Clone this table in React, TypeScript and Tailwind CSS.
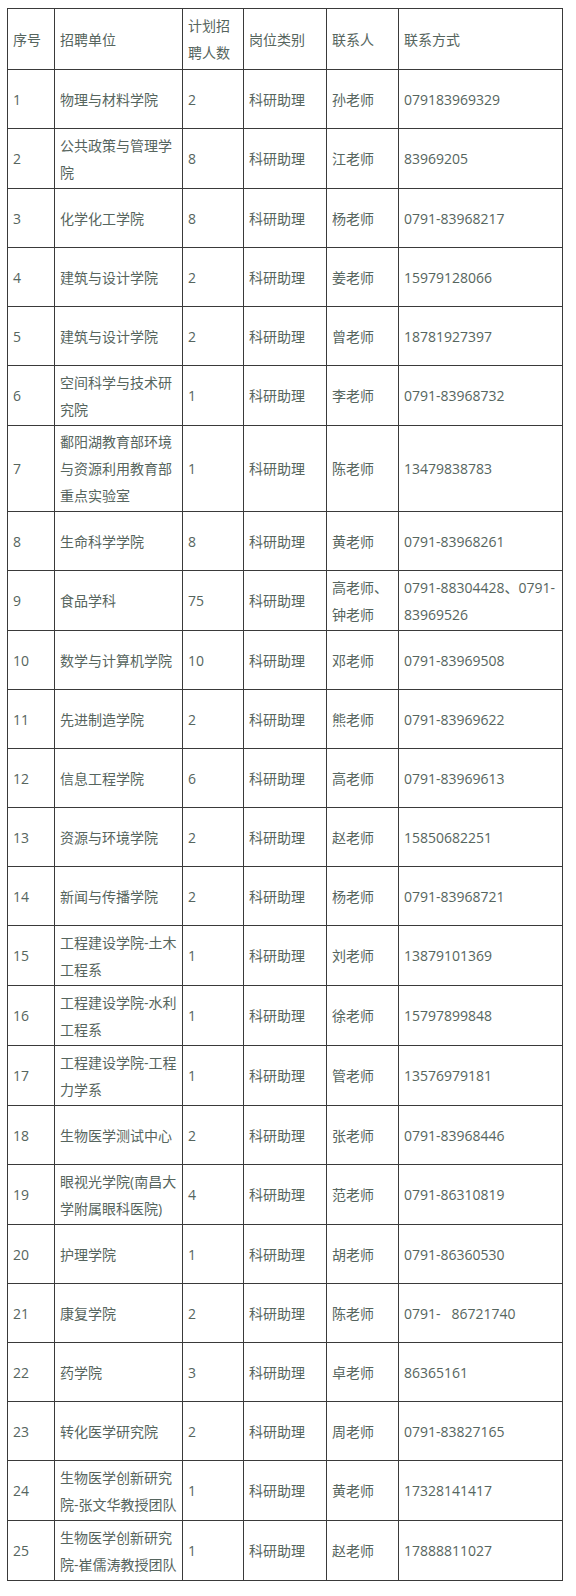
import React from "react";

type Row = {
  no: string;
  unit: string[];
  num: string;
  contact: string[];
  phone: string[];
  h: number;
};

const rows: Row[] = [
  { no: "1", unit: ["物理与材料学院"], num: "2", contact: ["孙老师"], phone: ["079183969329"], h: 59 },
  { no: "2", unit: ["公共政策与管理学", "院"], num: "8", contact: ["江老师"], phone: ["83969205"], h: 60 },
  { no: "3", unit: ["化学化工学院"], num: "8", contact: ["杨老师"], phone: ["0791-83968217"], h: 59 },
  { no: "4", unit: ["建筑与设计学院"], num: "2", contact: ["姜老师"], phone: ["15979128066"], h: 59 },
  { no: "5", unit: ["建筑与设计学院"], num: "2", contact: ["曾老师"], phone: ["18781927397"], h: 59 },
  { no: "6", unit: ["空间科学与技术研", "究院"], num: "1", contact: ["李老师"], phone: ["0791-83968732"], h: 60 },
  { no: "7", unit: ["鄱阳湖教育部环境", "与资源利用教育部", "重点实验室"], num: "1", contact: ["陈老师"], phone: ["13479838783"], h: 86 },
  { no: "8", unit: ["生命科学学院"], num: "8", contact: ["黄老师"], phone: ["0791-83968261"], h: 59 },
  { no: "9", unit: ["食品学科"], num: "75", contact: ["高老师、", "钟老师"], phone: ["0791-88304428、0791-", "83969526"], h: 60 },
  { no: "10", unit: ["数学与计算机学院"], num: "10", contact: ["邓老师"], phone: ["0791-83969508"], h: 59 },
  { no: "11", unit: ["先进制造学院"], num: "2", contact: ["熊老师"], phone: ["0791-83969622"], h: 59 },
  { no: "12", unit: ["信息工程学院"], num: "6", contact: ["高老师"], phone: ["0791-83969613"], h: 59 },
  { no: "13", unit: ["资源与环境学院"], num: "2", contact: ["赵老师"], phone: ["15850682251"], h: 59 },
  { no: "14", unit: ["新闻与传播学院"], num: "2", contact: ["杨老师"], phone: ["0791-83968721"], h: 59 },
  { no: "15", unit: ["工程建设学院-土木", "工程系"], num: "1", contact: ["刘老师"], phone: ["13879101369"], h: 60 },
  { no: "16", unit: ["工程建设学院-水利", "工程系"], num: "1", contact: ["徐老师"], phone: ["15797899848"], h: 60 },
  { no: "17", unit: ["工程建设学院-工程", "力学系"], num: "1", contact: ["管老师"], phone: ["13576979181"], h: 60 },
  { no: "18", unit: ["生物医学测试中心"], num: "2", contact: ["张老师"], phone: ["0791-83968446"], h: 59 },
  { no: "19", unit: ["眼视光学院(南昌大", "学附属眼科医院)"], num: "4", contact: ["范老师"], phone: ["0791-86310819"], h: 60 },
  { no: "20", unit: ["护理学院"], num: "1", contact: ["胡老师"], phone: ["0791-86360530"], h: 59 },
  { no: "21", unit: ["康复学院"], num: "2", contact: ["陈老师"], phone: ["0791-\u00a0\u00a0\u00a086721740"], h: 59 },
  { no: "22", unit: ["药学院"], num: "3", contact: ["卓老师"], phone: ["86365161"], h: 59 },
  { no: "23", unit: ["转化医学研究院"], num: "2", contact: ["周老师"], phone: ["0791-83827165"], h: 59 },
  { no: "24", unit: ["生物医学创新研究", "院-张文华教授团队"], num: "1", contact: ["黄老师"], phone: ["17328141417"], h: 60 },
  { no: "25", unit: ["生物医学创新研究", "院-崔儒涛教授团队"], num: "1", contact: ["赵老师"], phone: ["17888811027"], h: 60 },
];

function Lines({ items }: { items: string[] }) {
  return (
    <>
      {items.map((t, i) => (
        <div key={i} className="whitespace-nowrap">
          {t}
        </div>
      ))}
    </>
  );
}

const td =
  "border border-[#3a3a3a] align-middle pl-[5px] pr-[2px] text-[14px] leading-[27px] text-[#56655e] overflow-hidden";

export default function App() {
  return (
    <div
      className="w-[576px] min-h-[1596px] bg-white pt-[8px] pl-[7px]"
      style={{ fontFamily: '"Open Sans", "Noto Sans CJK SC", sans-serif' }}
    >
      <table className="table-fixed border-collapse w-[555px]">
        <colgroup>
          <col className="w-[47px]" />
          <col className="w-[128px]" />
          <col className="w-[61px]" />
          <col className="w-[83px]" />
          <col className="w-[72px]" />
          <col className="w-[164px]" />
        </colgroup>
        <thead>
          <tr className="h-[61px]">
            <td className={td}>序号</td>
            <td className={td}>招聘单位</td>
            <td className={td}>
              <Lines items={["计划招", "聘人数"]} />
            </td>
            <td className={td}>岗位类别</td>
            <td className={td}>联系人</td>
            <td className={td}>联系方式</td>
          </tr>
        </thead>
        <tbody>
          {rows.map((r) => (
            <tr key={r.no} style={{ height: r.h }}>
              <td className={td}>{r.no}</td>
              <td className={td}>
                <Lines items={r.unit} />
              </td>
              <td className={td}>{r.num}</td>
              <td className={td}>科研助理</td>
              <td className={td}>
                <Lines items={r.contact} />
              </td>
              <td className={td}>
                <Lines items={r.phone} />
              </td>
            </tr>
          ))}
        </tbody>
      </table>
    </div>
  );
}
